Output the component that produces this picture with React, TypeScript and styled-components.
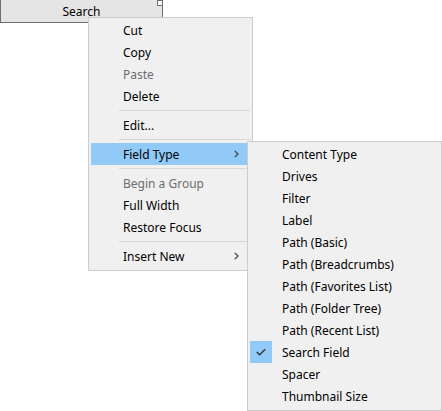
import React from 'react'
import styled, { createGlobalStyle } from 'styled-components'

const GlobalStyle = createGlobalStyle`
  html, body {
    margin: 0;
    background: #ffffff;
    font-family: "Noto Sans", "Open Sans", sans-serif;
    font-size: 12px;
  }
`

const Stage = styled.div`
  position: relative;
  width: 442px;
  height: 411px;
  overflow: hidden;
`

const SearchButton = styled.div`
  position: relative;
  box-sizing: border-box;
  width: 163px;
  height: 24px;
  margin-top: -1px;
  background: #e5e5e5;
  border: 1px solid #6e6e6e;
  display: flex;
  align-items: center;
  justify-content: center;
  color: #000;
`

const Grip = styled.span`
  position: absolute;
  right: -1px;
  top: 0;
  width: 4px;
  height: 4px;
  background: #fff;
  border: 1px solid #6e6e6e;
`

const MenuPanel = styled.div<{ $left: number; $top: number; $width: number }>`
  position: absolute;
  left: ${p => p.$left}px;
  top: ${p => p.$top}px;
  width: ${p => p.$width}px;
  box-sizing: border-box;
  background: #f0f0f0;
  border: 1px solid #cccccc;
  padding: 1px 2px 3px;
  display: flex;
  flex-direction: column;
`

const Item = styled.div<{ $disabled?: boolean; $active?: boolean }>`
  position: relative;
  height: 22px;
  display: flex;
  align-items: center;
  padding-left: 32px;
  padding-right: 10px;
  color: ${p => (p.$disabled ? '#6d6d6d' : '#000000')};
  background: ${p => (p.$active ? '#91c9f7' : 'transparent')};
  white-space: nowrap;
`

const Label = styled.span`
  flex: 1;
`

const Arrow = styled.svg`
  width: 5px;
  height: 8px;
  margin-right: 1px;
`

const CheckBox = styled.span`
  position: absolute;
  left: 0;
  top: 0;
  width: 22px;
  height: 22px;
  background: #91c9f7;
  display: flex;
  align-items: center;
  justify-content: center;
`

const Separator = styled.div`
  height: 7px;
  display: flex;
  align-items: center;
  padding-left: 28px;
  &::after {
    content: '';
    flex: 1;
    height: 1px;
    background: #d7d7d7;
  }
`

const Chevron = () => (
  <Arrow viewBox="0 0 5 8">
    <path d="M0.8 0.8 L4 4 L0.8 7.2" fill="none" stroke="#3c3c3c" strokeWidth="1.2" />
  </Arrow>
)

const Check = () => (
  <svg width="10" height="8" viewBox="0 0 10 8">
    <path d="M0.8 4 L3.6 6.8 L9.2 1.2" fill="none" stroke="#333" strokeWidth="1.4" />
  </svg>
)

const fieldTypes = [
  'Content Type',
  'Drives',
  'Filter',
  'Label',
  'Path (Basic)',
  'Path (Breadcrumbs)',
  'Path (Favorites List)',
  'Path (Folder Tree)',
  'Path (Recent List)',
  'Search Field',
  'Spacer',
  'Thumbnail Size',
]

export default function App() {
  return (
    <Stage>
      <GlobalStyle />
      <SearchButton>
        Search
        <Grip />
      </SearchButton>

      <MenuPanel $left={88} $top={17} $width={165}>
        <Item><Label>Cut</Label></Item>
        <Item><Label>Copy</Label></Item>
        <Item $disabled><Label>Paste</Label></Item>
        <Item><Label>Delete</Label></Item>
        <Separator />
        <Item><Label>Edit...</Label></Item>
        <Separator />
        <Item $active><Label>Field Type</Label><Chevron /></Item>
        <Separator />
        <Item $disabled><Label>Begin a Group</Label></Item>
        <Item><Label>Full Width</Label></Item>
        <Item><Label>Restore Focus</Label></Item>
        <Separator />
        <Item><Label>Insert New</Label><Chevron /></Item>
      </MenuPanel>

      <MenuPanel $left={247} $top={141} $width={195}>
        {fieldTypes.map(name => (
          <Item key={name}>
            {name === 'Search Field' && (
              <CheckBox><Check /></CheckBox>
            )}
            <Label>{name}</Label>
          </Item>
        ))}
      </MenuPanel>
    </Stage>
  )
}
